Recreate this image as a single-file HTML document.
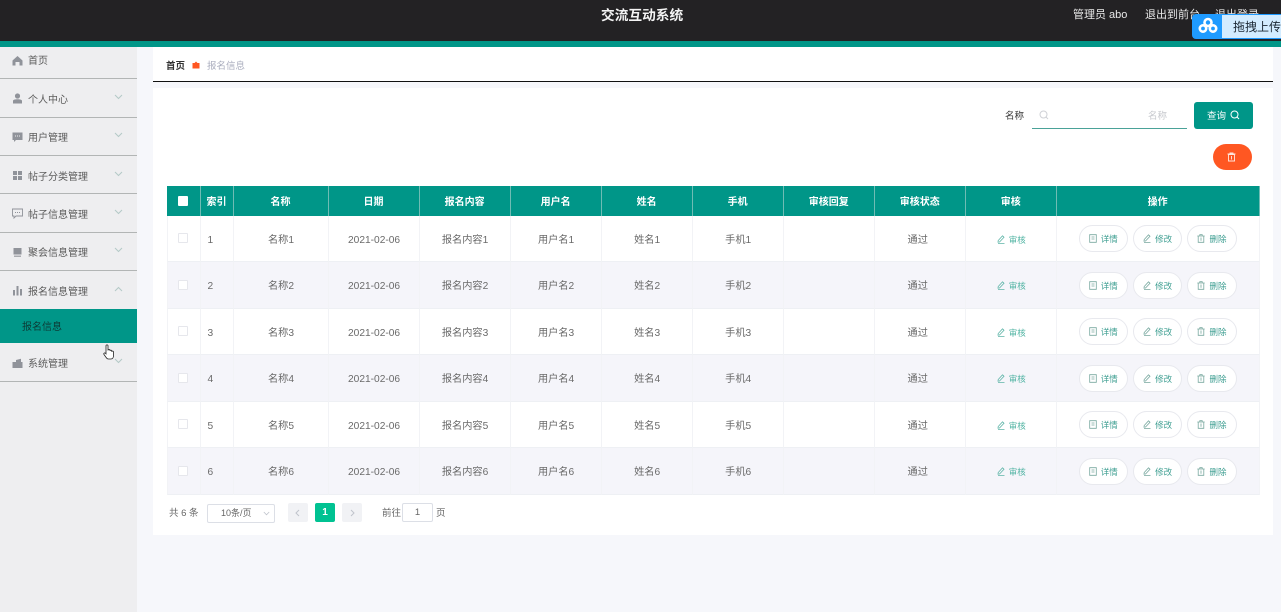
<!DOCTYPE html>
<html lang="zh"><head><meta charset="utf-8"><title>交流互动系统</title>
<style>
*{box-sizing:border-box}
html,body{margin:0;padding:0}
html{background:#f6f7fb}
body{width:1281px;height:612px;overflow:hidden;position:relative;background:#f6f7fb;font-family:"Liberation Sans","Noto Sans CJK SC",sans-serif;font-size:10px;color:#666;filter:blur(.3px)}
.a{position:absolute;white-space:nowrap}
#top{left:0;top:0;width:1281px;height:41px;background:#232224}
#bar{left:0;top:41px;width:1281px;height:6px;background:#009688}
#side{left:0;top:47px;width:137px;height:565px;background:#eeeef0}
.m{left:0;width:137px;border-bottom:1px solid #b2b5b5}
.t{left:28px;font-size:10px;line-height:14px;color:#5c5c5c}
.ic{left:12px;width:11px;height:11px}
.ch{left:114px;width:9px;height:6px}
#bc{left:153px;top:47px;width:1120px;height:35px;background:#fff;border-bottom:1px solid #111}
#card{left:153px;top:88px;width:1120px;height:447px;background:#fff}
table{position:absolute;left:167px;top:186px;width:1092.500px;border-collapse:separate;border-spacing:0;table-layout:fixed}
th{height:29.900px;background:#009688;color:#fff;font-size:10px;font-weight:700;padding:0;border-right:1px solid #6fbcb4;text-align:center}
td{height:46.500px;padding:4px 0 0 1px;line-height:14px;text-align:center;font-size:10.200px;color:#6a6a6a;border-right:1px solid #f2f3f6;border-bottom:1px solid #eef0f4;white-space:nowrap}
td:first-child{border-left:1px solid #f2f3f6}
tr:nth-child(odd) td{background:#f5f5fa}
td.n{text-align:left;padding-left:7px}
td.c0{padding:1px 1px 0 0}
td.pr{padding-right:5px}
.cb{display:inline-block;width:10px;height:10px;background:#fff;border:1px solid #e6e7ec;border-radius:1px;vertical-align:middle}
th .cb{border-color:#fff}
td.lk{color:#4fb3a2;font-size:8.500px;padding-top:2px}
.lk svg,.b svg{vertical-align:-1px;margin-right:4px}
.b{display:inline-block;width:49.330px;height:27px;line-height:27px;border:1px solid #e8e9ee;border-radius:14px;background:#fff;color:#3f9f92;font-size:8.500px;margin:0 2.500px;text-align:center;vertical-align:middle}
td.ops{padding:0;font-size:0}
</style></head><body>
<div class="a" id="top"></div><div class="a" id="bar"></div>
<div class="a" style="left:601px;top:6px;font-size:13.700px;line-height:20px;font-weight:700;color:#f4f4f4">交流互动系统</div>
<div class="a" style="left:1073px;top:8px;font-size:11px;line-height:15px;color:#e8e8e8">管理员 abo</div>
<div class="a" style="left:1145px;top:8px;font-size:11px;line-height:15px;color:#e8e8e8">退出到前台</div>
<div class="a" style="left:1215px;top:8px;font-size:11px;line-height:15px;color:#e8e8e8">退出登录</div>
<div class="a" style="left:1192px;top:14px;width:89px;height:25px;background:#1f9bff;border-radius:4px 0 0 4px"></div>
<div class="a" style="left:1222px;top:15px;width:59px;height:23px;background:#d3ecff"></div>
<svg class="a" style="left:1198px;top:16px" width="20" height="19" viewBox="0 0 20 19"><g fill="none" stroke="#fff" stroke-width="2.600"><circle cx="10" cy="6.500" r="3.500"/><circle cx="5" cy="12.500" r="3.200"/><circle cx="15" cy="12.500" r="3.200"/></g></svg>
<div class="a" style="left:1233px;top:20px;font-size:12px;line-height:15px;color:#1b2733">拖拽上传</div>

<div class="a" id="side"></div>
<div class="a m" style="top:47px;height:32px"></div>
<div class="a m" style="top:79px;height:39px"></div>
<div class="a m" style="top:118px;height:38px"></div>
<div class="a m" style="top:156px;height:38px"></div>
<div class="a m" style="top:194px;height:39px"></div>
<div class="a m" style="top:233px;height:38px"></div>
<div class="a" style="left:0;top:309px;width:137px;height:34px;background:#009688"></div>
<div class="a m" style="top:343px;height:39px"></div>

<div class="a t" style="top:55px">首页</div>
<div class="a t" style="top:94px">个人中心</div>
<div class="a t" style="top:132px">用户管理</div>
<div class="a t" style="top:171px">帖子分类管理</div>
<div class="a t" style="top:209px">帖子信息管理</div>
<div class="a t" style="top:247px">聚会信息管理</div>
<div class="a t" style="top:286px">报名信息管理</div>
<div class="a t" style="top:321px;left:22px;color:#0c3b36">报名信息</div>
<div class="a t" style="top:358px">系统管理</div>

<svg class="a ic" style="top:55px" viewBox="0 0 11 11"><path d="M5.500 1 10.500 5.500V10.500H7.500V7H3.500V10.500H.5V5.500Z" fill="#90939a"/></svg>
<svg class="a ic" style="top:93px" viewBox="0 0 11 11"><circle cx="5.500" cy="3" r="2.600" fill="#90939a"/><path d="M1 10.500V8C1 6.800 3 6.300 5.500 6.300S10 6.800 10 8V10.500Z" fill="#90939a"/></svg>
<svg class="a ic" style="top:132px" viewBox="0 0 11 11"><path d="M.5.500H10.500V8H4L2 10V8H.5Z" fill="#90939a"/><path d="M3 4H4M5 4H6M7 4H8" stroke="#eee" stroke-width="1"/></svg>
<svg class="a ic" style="top:170px" viewBox="0 0 11 11"><path d="M1 1H5V5H1ZM6 1H10V5H6ZM1 6H5V10H1ZM6 6H10V10H6Z" fill="#90939a"/></svg>
<svg class="a ic" style="top:208px" viewBox="0 0 11 11"><path d="M.5 1H10.500V8H4L2 10V8H.5Z" fill="none" stroke="#90939a" stroke-width=".9"/><path d="M3 4.500H4M5 4.500H6M7 4.500H8" stroke="#90939a"/></svg>
<svg class="a ic" style="top:247px" viewBox="0 0 11 11"><path d="M1.500 1H9.500V7.500H1.500Z" fill="#90939a"/><path d="M2 8.500H9V10H2Z" fill="#a9abb0"/></svg>
<svg class="a ic" style="top:285px" viewBox="0 0 11 11"><path d="M1 5H3V10.500H1ZM4.500 1H6.500V10.500H4.500ZM8 4H10V10.500H8Z" fill="#90939a"/></svg>
<svg class="a ic" style="top:358px" viewBox="0 0 11 11"><path d="M.5 4H10.500V10H.5ZM4 2 9 .8V4H4Z" fill="#90939a"/></svg>

<svg class="a ch" style="top:94px" viewBox="0 0 9 6"><path d="M1 1 4.500 4.500 8 1" fill="none" stroke="#b4c9c7"/></svg>
<svg class="a ch" style="top:132px" viewBox="0 0 9 6"><path d="M1 1 4.500 4.500 8 1" fill="none" stroke="#b4c9c7"/></svg>
<svg class="a ch" style="top:171px" viewBox="0 0 9 6"><path d="M1 1 4.500 4.500 8 1" fill="none" stroke="#b4c9c7"/></svg>
<svg class="a ch" style="top:209px" viewBox="0 0 9 6"><path d="M1 1 4.500 4.500 8 1" fill="none" stroke="#b4c9c7"/></svg>
<svg class="a ch" style="top:247px" viewBox="0 0 9 6"><path d="M1 1 4.500 4.500 8 1" fill="none" stroke="#b4c9c7"/></svg>
<svg class="a ch" style="top:286px" viewBox="0 0 9 6"><path d="M1 5 4.500 1.500 8 5" fill="none" stroke="#b4c9c7"/></svg>
<svg class="a ch" style="top:358px" viewBox="0 0 9 6"><path d="M1 1 4.500 4.500 8 1" fill="none" stroke="#b4c9c7"/></svg>

<svg class="a" style="left:103px;top:344px" width="12" height="16" viewBox="0 0 12 16"><path d="M3 1.800C3 .6 5 .6 5 1.800V6.500C5 5 7 5 7 6.500V7C7 5.800 8.700 5.800 8.700 7V7.800C8.700 6.800 10.500 6.800 10.500 8V11.500C10.500 13.500 9.500 15 8 15H5.500C4 15 3.500 14 1 10.500C.2 9.200 1.700 8.200 3 9.800Z" fill="#fff" stroke="#222" stroke-width=".8"/></svg>

<div class="a" id="bc"></div>
<div class="a" style="left:166px;top:60px;font-size:9.500px;line-height:14px;color:#333;font-weight:700">首页</div>
<svg class="a" style="left:192px;top:61px" width="8" height="8" viewBox="0 0 8 8"><path d="M.5 2H2.500L4 .5 5.500 2H7.500V7.500H.5Z" fill="#ff5722"/></svg>
<div class="a" style="left:207px;top:60px;font-size:9.500px;line-height:14px;color:#a9acbd">报名信息</div>

<div class="a" id="card"></div>
<div class="a" style="left:1005px;top:110px;font-size:9.500px;line-height:14px;color:#333">名称</div>
<div class="a" style="left:1032px;top:128px;width:155px;height:1px;background:#4aa298"></div>
<svg class="a" style="left:1039px;top:110px" width="10" height="10" viewBox="0 0 10 10"><circle cx="4.500" cy="4.500" r="3.500" fill="none" stroke="#cfd1d6"/><path d="M7 7 9 9" stroke="#cfd1d6"/></svg>
<div class="a" style="left:1148px;top:110px;font-size:9.500px;line-height:14px;color:#c6c8cd">名称</div>
<div class="a" style="left:1194px;top:102px;width:59px;height:27px;background:#009688;border-radius:3px"></div>
<div class="a" style="left:1207px;top:110px;font-size:9.500px;line-height:14px;color:#fff">查询</div>
<svg class="a" style="left:1230px;top:110px" width="10" height="10" viewBox="0 0 10 10"><circle cx="4.500" cy="4.500" r="3.500" fill="none" stroke="#fff"/><path d="M7 7 9 9" stroke="#fff"/></svg>
<div class="a" style="left:1213px;top:144px;width:39px;height:26px;background:#ff5722;border-radius:13px"></div>
<svg class="a" style="left:1227px;top:152px" width="9" height="10" viewBox="0 0 9 10"><path d="M1.500 2.500H7.500V9H1.500ZM.5 2H8.500M3 2V1H6V2M4.500 4V7.500" fill="none" stroke="#ffe6dc" stroke-width=".9"/></svg>

<table>
<colgroup><col style="width:33.500px"><col style="width:33px"><col style="width:95px"><col style="width:91px"><col style="width:91px"><col style="width:91px"><col style="width:91px"><col style="width:91px"><col style="width:91px"><col style="width:91px"><col style="width:91px"><col style="width:202.500px"></colgroup>
<tr><th><span class="cb"></span></th><th>索引</th><th>名称</th><th>日期</th><th>报名内容</th><th>用户名</th><th>姓名</th><th>手机</th><th>审核回复</th><th>审核状态</th><th>审核</th><th>操作</th></tr>
<tr><td class="c0"><span class="cb"></span></td><td class="n">1</td><td>名称1</td><td>2021-02-06</td><td>报名内容1</td><td>用户名1</td><td>姓名1</td><td>手机1</td><td></td><td class="pr">通过</td><td class="lk"><svg width="8" height="9" viewBox="0 0 8 9"><path d="M5.500 .8 7 2.300 2.500 7 1 7.200 1.200 5.500ZM1 8.500H7.500" fill="none" stroke="#5fb5a8" stroke-width=".8"/></svg>审核</td><td class="ops"><span class="b"><svg width="8" height="9" viewBox="0 0 8 9"><path d="M.7.700H7.300V8.300H.7ZM2.500 3H5.500M2.500 5H5.500" fill="none" stroke="#78a89f" stroke-width=".8"/></svg>详情</span><span class="b"><svg width="8" height="9" viewBox="0 0 8 9"><path d="M5.500 .8 7 2.300 2.500 7 1 7.200 1.200 5.500ZM1 8.500H7.500" fill="none" stroke="#78a89f" stroke-width=".8"/></svg>修改</span><span class="b"><svg width="8" height="9" viewBox="0 0 8 9"><path d="M1.200 2H6.800V8.300H1.200ZM.3 2H7.700M2.800 2V.7H5.200V2M4 3.500V6.800" fill="none" stroke="#78a89f" stroke-width=".8"/></svg>删除</span></td></tr>
<tr><td class="c0"><span class="cb"></span></td><td class="n">2</td><td>名称2</td><td>2021-02-06</td><td>报名内容2</td><td>用户名2</td><td>姓名2</td><td>手机2</td><td></td><td class="pr">通过</td><td class="lk"><svg width="8" height="9" viewBox="0 0 8 9"><path d="M5.500 .8 7 2.300 2.500 7 1 7.200 1.200 5.500ZM1 8.500H7.500" fill="none" stroke="#5fb5a8" stroke-width=".8"/></svg>审核</td><td class="ops"><span class="b"><svg width="8" height="9" viewBox="0 0 8 9"><path d="M.7.700H7.300V8.300H.7ZM2.500 3H5.500M2.500 5H5.500" fill="none" stroke="#78a89f" stroke-width=".8"/></svg>详情</span><span class="b"><svg width="8" height="9" viewBox="0 0 8 9"><path d="M5.500 .8 7 2.300 2.500 7 1 7.200 1.200 5.500ZM1 8.500H7.500" fill="none" stroke="#78a89f" stroke-width=".8"/></svg>修改</span><span class="b"><svg width="8" height="9" viewBox="0 0 8 9"><path d="M1.200 2H6.800V8.300H1.200ZM.3 2H7.700M2.800 2V.7H5.200V2M4 3.500V6.800" fill="none" stroke="#78a89f" stroke-width=".8"/></svg>删除</span></td></tr>
<tr><td class="c0"><span class="cb"></span></td><td class="n">3</td><td>名称3</td><td>2021-02-06</td><td>报名内容3</td><td>用户名3</td><td>姓名3</td><td>手机3</td><td></td><td class="pr">通过</td><td class="lk"><svg width="8" height="9" viewBox="0 0 8 9"><path d="M5.500 .8 7 2.300 2.500 7 1 7.200 1.200 5.500ZM1 8.500H7.500" fill="none" stroke="#5fb5a8" stroke-width=".8"/></svg>审核</td><td class="ops"><span class="b"><svg width="8" height="9" viewBox="0 0 8 9"><path d="M.7.700H7.300V8.300H.7ZM2.500 3H5.500M2.500 5H5.500" fill="none" stroke="#78a89f" stroke-width=".8"/></svg>详情</span><span class="b"><svg width="8" height="9" viewBox="0 0 8 9"><path d="M5.500 .8 7 2.300 2.500 7 1 7.200 1.200 5.500ZM1 8.500H7.500" fill="none" stroke="#78a89f" stroke-width=".8"/></svg>修改</span><span class="b"><svg width="8" height="9" viewBox="0 0 8 9"><path d="M1.200 2H6.800V8.300H1.200ZM.3 2H7.700M2.800 2V.7H5.200V2M4 3.500V6.800" fill="none" stroke="#78a89f" stroke-width=".8"/></svg>删除</span></td></tr>
<tr><td class="c0"><span class="cb"></span></td><td class="n">4</td><td>名称4</td><td>2021-02-06</td><td>报名内容4</td><td>用户名4</td><td>姓名4</td><td>手机4</td><td></td><td class="pr">通过</td><td class="lk"><svg width="8" height="9" viewBox="0 0 8 9"><path d="M5.500 .8 7 2.300 2.500 7 1 7.200 1.200 5.500ZM1 8.500H7.500" fill="none" stroke="#5fb5a8" stroke-width=".8"/></svg>审核</td><td class="ops"><span class="b"><svg width="8" height="9" viewBox="0 0 8 9"><path d="M.7.700H7.300V8.300H.7ZM2.500 3H5.500M2.500 5H5.500" fill="none" stroke="#78a89f" stroke-width=".8"/></svg>详情</span><span class="b"><svg width="8" height="9" viewBox="0 0 8 9"><path d="M5.500 .8 7 2.300 2.500 7 1 7.200 1.200 5.500ZM1 8.500H7.500" fill="none" stroke="#78a89f" stroke-width=".8"/></svg>修改</span><span class="b"><svg width="8" height="9" viewBox="0 0 8 9"><path d="M1.200 2H6.800V8.300H1.200ZM.3 2H7.700M2.800 2V.7H5.200V2M4 3.500V6.800" fill="none" stroke="#78a89f" stroke-width=".8"/></svg>删除</span></td></tr>
<tr><td class="c0"><span class="cb"></span></td><td class="n">5</td><td>名称5</td><td>2021-02-06</td><td>报名内容5</td><td>用户名5</td><td>姓名5</td><td>手机5</td><td></td><td class="pr">通过</td><td class="lk"><svg width="8" height="9" viewBox="0 0 8 9"><path d="M5.500 .8 7 2.300 2.500 7 1 7.200 1.200 5.500ZM1 8.500H7.500" fill="none" stroke="#5fb5a8" stroke-width=".8"/></svg>审核</td><td class="ops"><span class="b"><svg width="8" height="9" viewBox="0 0 8 9"><path d="M.7.700H7.300V8.300H.7ZM2.500 3H5.500M2.500 5H5.500" fill="none" stroke="#78a89f" stroke-width=".8"/></svg>详情</span><span class="b"><svg width="8" height="9" viewBox="0 0 8 9"><path d="M5.500 .8 7 2.300 2.500 7 1 7.200 1.200 5.500ZM1 8.500H7.500" fill="none" stroke="#78a89f" stroke-width=".8"/></svg>修改</span><span class="b"><svg width="8" height="9" viewBox="0 0 8 9"><path d="M1.200 2H6.800V8.300H1.200ZM.3 2H7.700M2.800 2V.7H5.200V2M4 3.500V6.800" fill="none" stroke="#78a89f" stroke-width=".8"/></svg>删除</span></td></tr>
<tr><td class="c0"><span class="cb"></span></td><td class="n">6</td><td>名称6</td><td>2021-02-06</td><td>报名内容6</td><td>用户名6</td><td>姓名6</td><td>手机6</td><td></td><td class="pr">通过</td><td class="lk"><svg width="8" height="9" viewBox="0 0 8 9"><path d="M5.500 .8 7 2.300 2.500 7 1 7.200 1.200 5.500ZM1 8.500H7.500" fill="none" stroke="#5fb5a8" stroke-width=".8"/></svg>审核</td><td class="ops"><span class="b"><svg width="8" height="9" viewBox="0 0 8 9"><path d="M.7.700H7.300V8.300H.7ZM2.500 3H5.500M2.500 5H5.500" fill="none" stroke="#78a89f" stroke-width=".8"/></svg>详情</span><span class="b"><svg width="8" height="9" viewBox="0 0 8 9"><path d="M5.500 .8 7 2.300 2.500 7 1 7.200 1.200 5.500ZM1 8.500H7.500" fill="none" stroke="#78a89f" stroke-width=".8"/></svg>修改</span><span class="b"><svg width="8" height="9" viewBox="0 0 8 9"><path d="M1.200 2H6.800V8.300H1.200ZM.3 2H7.700M2.800 2V.7H5.200V2M4 3.500V6.800" fill="none" stroke="#78a89f" stroke-width=".8"/></svg>删除</span></td></tr>
</table>

<div class="a" style="left:169px;top:507px;font-size:9.500px;line-height:14px;color:#666">共 6 条</div>
<div class="a" style="left:207px;top:504px;width:68px;height:19px;background:#fff;border:1px solid #dcdfe6;border-radius:2px"></div>
<div class="a" style="left:221px;top:506px;font-size:9px;line-height:14px;color:#666">10条/页</div>
<svg class="a" style="left:263px;top:511px" width="7" height="5" viewBox="0 0 7 5"><path d="M.8 1 3.500 3.800 6.200 1" fill="none" stroke="#c0c4cc" stroke-width=".8"/></svg>
<div class="a" style="left:288px;top:503px;width:20px;height:19px;background:#f1f2f5;border-radius:2px"></div>
<svg class="a" style="left:295px;top:509px" width="5" height="8" viewBox="0 0 5 8"><path d="M4 1 1 4 4 7" fill="none" stroke="#c0c4cc"/></svg>
<div class="a" style="left:315px;top:503px;width:20px;height:19px;background:#00c292;border-radius:2px;color:#fff;font-size:10px;font-weight:700;line-height:20px;text-align:center">1</div>
<div class="a" style="left:342px;top:503px;width:20px;height:19px;background:#f1f2f5;border-radius:2px"></div>
<svg class="a" style="left:350px;top:509px" width="5" height="8" viewBox="0 0 5 8"><path d="M1 1 4 4 1 7" fill="none" stroke="#c0c4cc"/></svg>
<div class="a" style="left:382px;top:507px;font-size:9.500px;line-height:14px;color:#666">前往</div>
<div class="a" style="left:402px;top:503px;width:31px;height:19px;background:#fff;border:1px solid #dcdfe6;border-radius:2px;font-size:9.500px;line-height:18px;text-align:center;color:#666">1</div>
<div class="a" style="left:436px;top:507px;font-size:9.500px;line-height:14px;color:#666">页</div>
</body></html>
